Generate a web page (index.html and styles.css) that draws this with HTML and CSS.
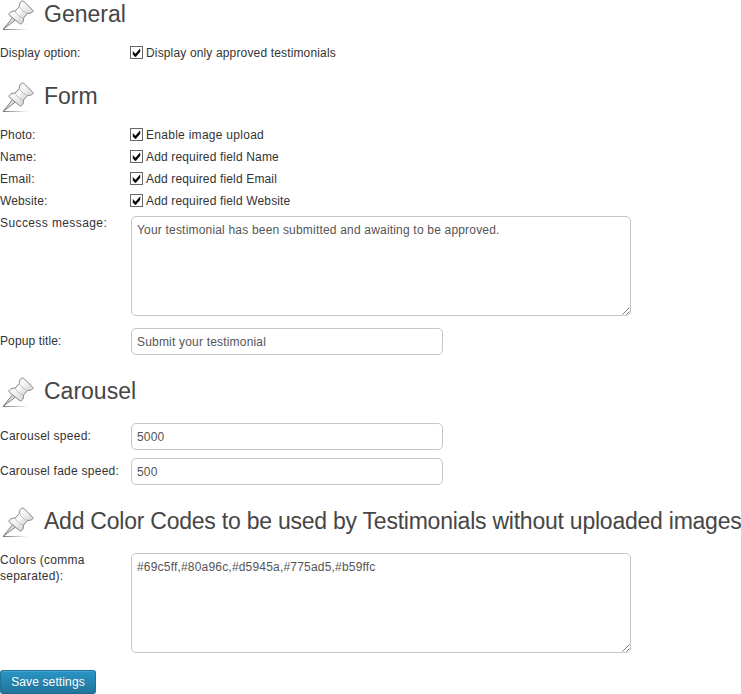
FILE: index.html
```
<!DOCTYPE html>
<html lang="en">
<head>
<meta charset="utf-8">
<title>Testimonial settings</title>
<link rel="stylesheet" href="styles.css">
</head>
<body>
<svg class="defs" width="0" height="0" aria-hidden="true">
  <defs>
    <linearGradient id="metal" x1="0" y1="0" x2="1" y2="1">
      <stop offset="0" stop-color="#dedede"/><stop offset=".4" stop-color="#f8f8f8"/><stop offset="1" stop-color="#bcbcbc"/>
    </linearGradient>
    <linearGradient id="shade"><stop offset="0" stop-color="#777"/><stop offset="1" stop-color="#777" stop-opacity="0"/></linearGradient>
    <symbol id="pin" viewBox="0 0 36 32">
      <path d="M3 29h25v1H3z" fill="url(#shade)"/>
      <path d="M3.3 29.2 12.6 17.6l2.8 2.5z" fill="#ddd" stroke="#777" stroke-width=".9" stroke-linejoin="round"/>
      <path d="M9.4 13.2c1.6-1.8 3.6-2.3 5.8-2.2l4.2-4.6c-.4-2.3.6-4.2 2.3-5.3.8-.5 1.9.2 2.9 1.1l7.6 7.4c.9.9 1.2 1.7.4 2.4-1.5 1.2-3.2 1.6-4.9 1.4l-4.2 4.7c.4 2.4-.5 4.4-1.9 5.6-.8.8-1.7.2-2.5-.5l-9.2-7.5c-1-.9-1.4-1.7-.5-2.5z" fill="url(#metal)" stroke="#858585"/>
      <path d="M19.4 6.4c1.4 3.2 5 6.6 8.3 7M15.2 11c1 3 5 6.6 8.3 7.1" fill="none" stroke="#b5b5b5" stroke-width=".8"/>
      <path d="m20.7 9.4-3.3 3.9" stroke="#fff" stroke-width="1.8"/>
    </symbol>
  </defs>
</svg>
<form class="settings">
  <section class="section">
    <h2 class="heading"><svg class="pin"><use href="#pin"/></svg><span>General</span></h2>
    <div class="row"><span class="label tight">Display option:</span><label class="check"><span class="box"><svg viewBox="0 0 13 13"><path d="M3 5.5v3L5.5 11 10 5.8v-3L5.5 8z"/></svg></span><span>Display only approved testimonials</span></label></div>
  </section>
  <section class="section">
    <h2 class="heading"><svg class="pin"><use href="#pin"/></svg><span>Form</span></h2>
    <div class="row"><span class="label tight">Photo:</span><label class="check"><span class="box"><svg viewBox="0 0 13 13"><path d="M3 5.5v3L5.5 11 10 5.8v-3L5.5 8z"/></svg></span><span class="loose">Enable image upload</span></label></div>
    <div class="row"><span class="label">Name:</span><label class="check"><span class="box"><svg viewBox="0 0 13 13"><path d="M3 5.5v3L5.5 11 10 5.8v-3L5.5 8z"/></svg></span><span>Add required field Name</span></label></div>
    <div class="row"><span class="label">Email:</span><label class="check"><span class="box"><svg viewBox="0 0 13 13"><path d="M3 5.5v3L5.5 11 10 5.8v-3L5.5 8z"/></svg></span><span>Add required field Email</span></label></div>
    <div class="row"><span class="label tight">Website:</span><label class="check"><span class="box"><svg viewBox="0 0 13 13"><path d="M3 5.5v3L5.5 11 10 5.8v-3L5.5 8z"/></svg></span><span>Add required field Website</span></label></div>
    <div class="row area-row"><span class="label loose">Success message:</span><div class="area"><textarea spellcheck="false">Your testimonial has been submitted and awaiting to be approved.</textarea><svg class="grip" viewBox="0 0 8 8"><path d="m.5 7.5 7-7m-3 7 3-3"/></svg></div></div>
    <div class="row input-row"><span class="label tight">Popup title:</span><input type="text" value="Submit your testimonial"></div>
  </section>
  <section class="section">
    <h2 class="heading"><svg class="pin"><use href="#pin"/></svg><span>Carousel</span></h2>
    <div class="row input-row"><span class="label">Carousel speed:</span><input type="text" value="5000"></div>
    <div class="row input-row"><span class="label">Carousel fade speed:</span><input type="text" value="500"></div>
  </section>
  <section class="section">
    <h2 class="heading"><svg class="pin"><use href="#pin"/></svg><span class="long">Add Color Codes to be used by Testimonials without uploaded images</span></h2>
    <div class="row area-row"><span class="label">Colors (comma separated):</span><div class="area"><textarea spellcheck="false">#69c5ff,#80a96c,#d5945a,#775ad5,#b59ffc</textarea><svg class="grip" viewBox="0 0 8 8"><path d="m.5 7.5 7-7m-3 7 3-3"/></svg></div></div>
  </section>
  <button class="save" type="button">Save settings</button>
</form>
</body>
</html>
```

FILE: styles.css
```
* { box-sizing: border-box; }
body {
  margin: 0;
  background: #fff;
  color: #333;
  font: 12px/16px "Liberation Sans", Arial, sans-serif;
  letter-spacing: .25px;
  overflow: hidden;
}
.defs { position: absolute; }
.settings { width: 741px; }
.section { margin-bottom: 18px; }
.heading {
  display: flex;
  gap: 8px;
  height: 31px;
  margin: 0 0 11px;
  color: #464646;
  font-size: 23px;
  font-weight: 400;
  line-height: 28px;
  letter-spacing: 0;
  white-space: nowrap;
}
.heading .long { letter-spacing: -.235px; }
.pin { flex: none; width: 36px; height: 32px; }
.row {
  display: grid;
  grid-template-columns: 130px 1fr;
  align-items: center;
  min-height: 22px;
}
.label.loose { letter-spacing: .4px; }
.check .loose { letter-spacing: .28px; }
.label.tight { letter-spacing: .12px; }
.check { display: flex; align-items: flex-start; gap: 3px; letter-spacing: .15px; }
.box { width: 13px; height: 13px; margin-top: 1px; border: 1px solid #666; background: #fff; }
.box svg { display: block; width: 13px; height: 13px; margin: -1px; fill: #000; stroke: #000; stroke-width: .4; }
.area-row { height: 112px; align-items: start; }
.area-row .label { padding: 3px 20px 0 0; }
.input-row { height: 35px; }
.input-row .label { padding-bottom: 1px; }
.area { position: relative; width: 500px; height: 100px; margin: 4px 0 0 1px; }
textarea, input {
  display: block;
  margin: 0;
  border: 1px solid #c6c6c6;
  border-radius: 5px;
  outline: 0;
  background: #fff;
  color: #555;
  font: inherit;
  letter-spacing: .19px;
}
textarea { width: 500px; height: 100px; padding: 5px; resize: none; overflow: hidden; }
input { width: 312px; height: 27px; margin-left: 1px; padding: 0 5px; }
.grip { position: absolute; right: 1px; bottom: 1px; width: 8px; height: 8px; fill: none; stroke: #555; stroke-width: .8; }
.save {
  display: block;
  width: 96px;
  height: 24px;
  margin: -9px 0 0;
  padding: 0;
  border: 1px solid #21759b;
  border-bottom-color: #1e6a8d;
  border-radius: 3px;
  background: linear-gradient(#2a95c5, #21759b);
  box-shadow: inset 0 1px 0 rgba(120, 200, 230, .3);
  color: #fff;
  font: inherit;
  letter-spacing: .13px;
  text-shadow: 0 1px 0 rgba(0, 0, 0, .1);
}
```
